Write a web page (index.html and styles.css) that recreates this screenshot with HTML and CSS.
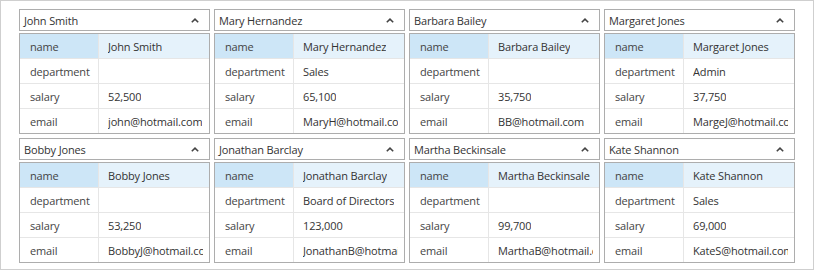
FILE: index.html
```html
<!DOCTYPE html>
<html lang="en">
<head>
    <meta charset="UTF-8">
    <title>Employees</title>
    <link rel="stylesheet" href="styles.css">
</head>
<body>
    <div class="panel">
        <div class="cards" id="cards"></div>
    </div>

    <script>
        const people = [
            { name: "John Smith", department: "", salary: "52,500", email: "john@hotmail.com" },
            { name: "Mary Hernandez", department: "Sales", salary: "65,100", email: "MaryH@hotmail.com" },
            { name: "Barbara Bailey", department: "", salary: "35,750", email: "BB@hotmail.com" },
            { name: "Margaret Jones", department: "Admin", salary: "37,750", email: "MargeJ@hotmail.com" },
            { name: "Bobby Jones", department: "", salary: "53,250", email: "BobbyJ@hotmail.com" },
            { name: "Jonathan Barclay", department: "Board of Directors", salary: "123,000", email: "JonathanB@hotmail.com" },
            { name: "Martha Beckinsale", department: "", salary: "99,700", email: "MarthaB@hotmail.com" },
            { name: "Kate Shannon", department: "Sales", salary: "69,000", email: "KateS@hotmail.com" }
        ];

        const cards = document.getElementById("cards");
        people.forEach(p => {
            const card = document.createElement("div");
            card.className = "card";
            card.innerHTML = `
                <div class="card-head">
                    <span>${p.name}</span>
                    <svg class="chevron" width="8" height="5" viewBox="0 0 8 5">
                        <polyline points="0.8,4.3 4,1.2 7.2,4.3" fill="none" stroke="#444" stroke-width="1.6"/>
                    </svg>
                </div>
                <div class="props">
                    ${["name", "department", "salary", "email"].map((key, i) => `
                        <div class="prop${i === 0 ? " selected" : ""}">
                            <div class="key">${key}</div>
                            <div class="val"><span>${p[key]}</span></div>
                        </div>`).join("")}
                </div>
            `;
            cards.appendChild(card);
        });
    </script>
</body>
</html>
```

FILE: styles.css
```css
* {
    margin: 0;
    padding: 0;
    box-sizing: border-box;
}

body {
    font-family: 'Open Sans', 'Noto Sans', Arial, sans-serif;
    font-size: 11px;
    letter-spacing: -0.15px;
    color: #333;
    background: #fff;
}

.panel {
    width: 814px;
    height: 270px;
    border: 1px solid #cfcfcf;
    padding: 8px 18px 6px;
}

.cards {
    display: grid;
    grid-template-columns: repeat(4, 191px);
    gap: 4px;
}

.card {
    display: flex;
    flex-direction: column;
    gap: 2px;
    min-width: 0;
}

.card-head {
    height: 22px;
    border: 1px solid #adadad;
    display: flex;
    align-items: center;
    justify-content: space-between;
    padding: 0 10px 0 4px;
    color: #333;
}

.chevron {
    display: block;
}

.props {
    border: 1px solid #adadad;
}

.prop {
    display: grid;
    grid-template-columns: 79px minmax(0, 1fr);
    height: 25px;
    border-bottom: 1px solid #e6e6e6;
}

.prop:last-child {
    height: 24px;
    border-bottom: none;
}

.key {
    border-right: 1px solid #e6e6e6;
    padding-left: 10px;
    display: flex;
    align-items: center;
    color: #444;
}

.val {
    display: flex;
    align-items: center;
    min-width: 0;
    padding-left: 9px;
    padding-right: 6px;
    color: #333;
}

.val span {
    display: block;
    min-width: 0;
    overflow: hidden;
    white-space: nowrap;
}

.prop.selected .key {
    background: #cde6f7;
}

.prop.selected .val {
    background: #e5f2fb;
}
```
